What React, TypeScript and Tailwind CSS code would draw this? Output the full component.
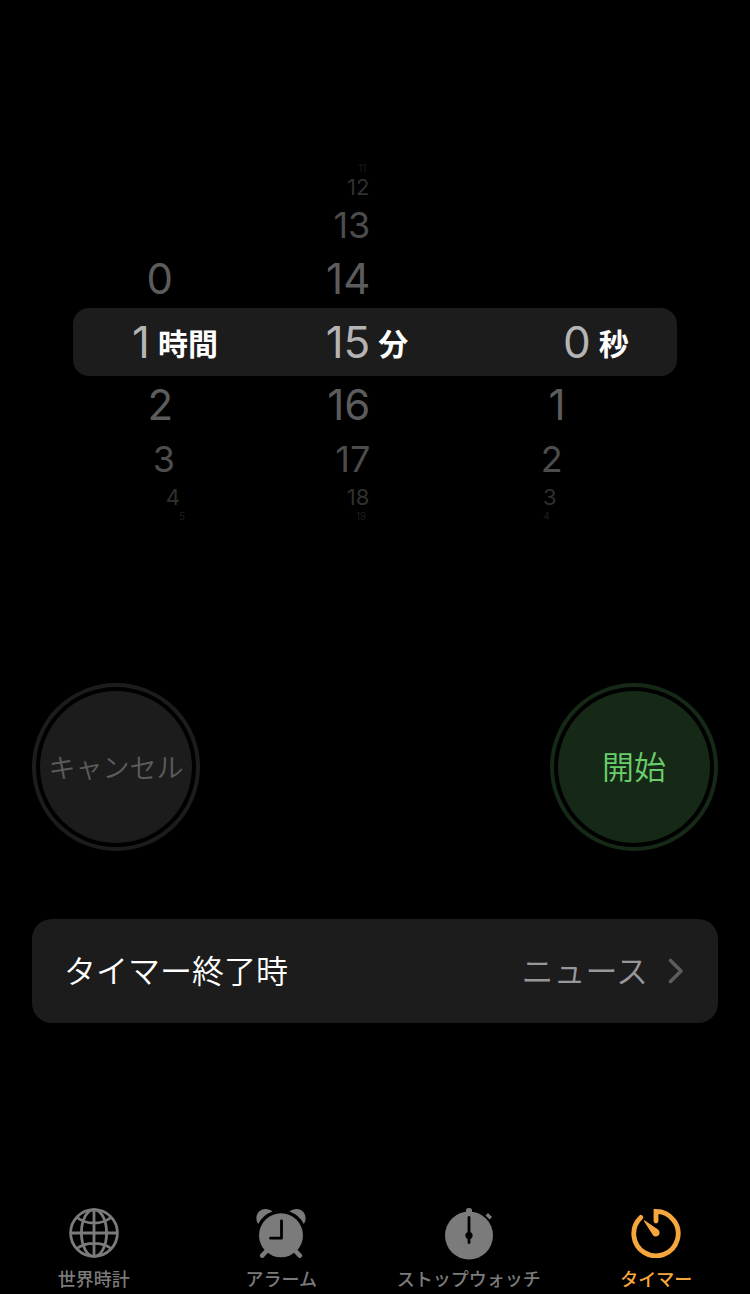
import { useState } from 'react'
import { clsx } from 'clsx'

// One entry per wheel row, by distance from the selected row
const ROW_HEIGHT = ['h-[68px]', 'h-[58px]', 'h-[50px]', 'h-[26px]', 'h-[12px]']
const ROW_TEXT = [
  'text-[44px] text-[#b4b4b4]',
  'text-[42px] text-[#5c5c5c]',
  'text-[36px] text-[#4c4c4c]',
  'text-[22px] text-[#303030]',
  'text-[10px] text-[#1e1e1e]',
]
const OFFSETS = [-4, -3, -2, -1, 0, 1, 2, 3, 4]

// Outer wheels lean towards the middle as rows turn away
const HOUR_EDGE = ['w-[77px]', 'w-[100px]', 'w-[102px]', 'w-[107px]', 'w-[112px]']
const MINUTE_EDGE = ['w-[96px]', 'w-[96px]', 'w-[96px]', 'w-[95px]', 'w-[92px]']
const SECOND_EDGE = ['w-[115px]', 'w-[90px]', 'w-[87px]', 'w-[81px]', 'w-[74px]']

interface WheelProps {
  unit: string
  max: number
  value: number
  edge: string[]
  onChange: (value: number) => void
}

function Wheel({ unit, max, value, edge, onChange }: WheelProps) {
  return (
    <div role="group" aria-label={unit} className="flex flex-col">
      {OFFSETS.map(offset => {
        const n = value + offset
        const d = Math.abs(offset)
        const inRange = n >= 0 && n <= max
        return (
          <div key={offset} className={clsx('flex items-center gap-2', ROW_HEIGHT[d])}>
            {inRange && (
              <button
                type="button"
                aria-pressed={d === 0}
                onClick={() => onChange(n)}
                className={clsx("text-right font-['Inter',sans-serif] font-normal leading-none", edge[d], ROW_TEXT[d])}
              >
                {n}
              </button>
            )}
            {d === 0 && <span className="text-[30px] font-bold leading-none text-white">{unit}</span>}
          </div>
        )
      })}
    </div>
  )
}

function GlobeIcon() {
  return (
    <svg viewBox="0 0 50 50" className="size-[50px]" fill="none" stroke="currentColor" strokeWidth="2.8" aria-hidden="true">
      <circle cx="25" cy="25" r="23.4" />
      <ellipse cx="25" cy="25" rx="12.6" ry="23.4" />
      <path d="M25 1.6v46.8M1.6 25h46.8M8 9.5C12.5 13 18.5 15 25 15s12.5-2 17-5.5M8 40.5C12.5 37 18.5 35.4 25 35.4s12.5 1.6 17 5.1" />
    </svg>
  )
}

function AlarmIcon() {
  return (
    <svg viewBox="0 0 50 50" className="size-[50px]" aria-hidden="true">
      <g fill="currentColor">
        <path d="M2.2 16C-2 10 1.500 1 9.500 1c2.800 0 5.200.9 7 2.600A26 26 0 0 0 2.200 16Z" />
        <path d="M47.800 16C52 10 48.500 1 40.500 1c-2.800 0-5.200.9-7 2.600A26 26 0 0 1 47.800 16Z" />
        <circle cx="25" cy="27.300" r="22" />
      </g>
      <path d="M10.500 43l-4.300 4.600M39.500 43l4.300 4.600" stroke="currentColor" strokeWidth="4.600" strokeLinecap="round" />
      <path d="M25.500 13v17.200H14.500" fill="none" stroke="#000" strokeWidth="2.800" strokeLinecap="round" strokeLinejoin="round" />
    </svg>
  )
}

function StopwatchIcon() {
  return (
    <svg viewBox="0 0 50 52" className="h-[52px] w-[50px]" aria-hidden="true">
      <circle cx="25" cy="27.500" r="24" fill="currentColor" />
      <path d="M22 6V2.400Q22 0 25 0t3 2.400V6Z" fill="currentColor" />
      <path d="M42.800 6.300l4 4" stroke="currentColor" strokeWidth="3.400" />
      <path d="M25 9.500v25" stroke="#000" strokeWidth="2.800" strokeLinecap="round" />
      <circle cx="25" cy="27.500" r="3.600" fill="#000" />
    </svg>
  )
}

function TimerIcon() {
  return (
    <svg viewBox="0 0 50 50" className="size-[50px]" aria-hidden="true">
      <path
        d="M25 13V3.400A22.200 22.200 0 1 1 9.800 9.400"
        fill="none"
        stroke="currentColor"
        strokeWidth="4.800"
        strokeLinecap="round"
        strokeLinejoin="miter"
      />
      <path d="M13 13.300c-.6-.8.100-1.300.8-.8L27 21.400c3.600 2.800.7 8.300-3.700 6.800-1.200-.5-1.900-1.500-2.400-2.600Z" fill="currentColor" />
    </svg>
  )
}

const TABS = [
  { label: '世界時計', Icon: GlobeIcon },
  { label: 'アラーム', Icon: AlarmIcon },
  { label: 'ストップウォッチ', Icon: StopwatchIcon },
  { label: 'タイマー', Icon: TimerIcon },
]

export default function App() {
  const [hours, setHours] = useState(1)
  const [minutes, setMinutes] = useState(15)
  const [seconds, setSeconds] = useState(0)

  return (
    <div className="flex min-h-screen flex-col bg-black font-['Noto_Sans_CJK_JP',sans-serif]">
      <main className="flex flex-1 flex-col px-8 pt-[162px]">
        <section className="relative mx-[41px]">
          <div className="absolute inset-x-0 top-[146px] h-[68px] rounded-2xl bg-[#1c1c1c]" />
          <div className="relative grid grid-cols-3">
            <Wheel unit="時間" max={23} value={hours} edge={HOUR_EDGE} onChange={setHours} />
            <Wheel unit="分" max={59} value={minutes} edge={MINUTE_EDGE} onChange={setMinutes} />
            <Wheel unit="秒" max={59} value={seconds} edge={SECOND_EDGE} onChange={setSeconds} />
          </div>
        </section>

        <div className="mt-[161px] flex justify-between">
          <button
            type="button"
            disabled
            className="size-[168px] rounded-full border-4 border-[#1c1c1c] p-1"
          >
            <span className="flex size-full items-center justify-center whitespace-nowrap rounded-full bg-[#1c1c1c] text-[27px] font-[350] text-[#5c5c5c]">
              キャンセル
            </span>
          </button>
          <button type="button" className="size-[168px] rounded-full border-4 border-[#162816] p-1">
            <span className="flex size-full items-center justify-center rounded-full bg-[#162816] pb-1 text-[32px] font-[350] text-[#69cd6c]">
              開始
            </span>
          </button>
        </div>

        <button
          type="button"
          className="mt-[68px] flex h-[104px] items-center rounded-[20px] bg-[#1c1c1c] pl-8 pr-[34px] text-[32px] font-[350]"
        >
          <span className="pb-1 text-white">タイマー終了時</span>
          <span className="ml-auto pb-1 text-[#98989c]">ニュース</span>
          <svg viewBox="0 0 16 26" className="ml-5 h-[26px] w-4" fill="none" stroke="#5c5c5f" strokeWidth="3.600" aria-hidden="true">
            <path d="M2.500 2.500L13 13L2.500 23.500" strokeLinecap="round" strokeLinejoin="round" />
          </svg>
        </button>
      </main>

      <nav className="grid grid-cols-4 pb-1">
        {TABS.map(({ label, Icon }) => {
          const active = label === 'タイマー'
          return (
            <a
              key={label}
              href="#"
              aria-current={active ? 'page' : undefined}
              className={clsx('flex flex-col items-center', active ? 'text-[#f5a63c]' : 'text-[#7b7b7b]')}
            >
              <span className="flex h-[58px] items-start">
                <Icon />
              </span>
              <span className="whitespace-nowrap text-lg font-medium leading-6">{label}</span>
            </a>
          )
        })}
      </nav>
    </div>
  )
}
